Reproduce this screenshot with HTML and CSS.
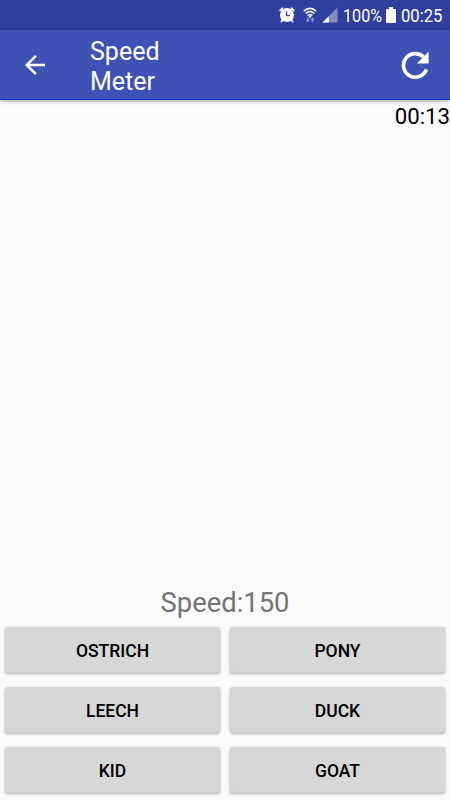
FILE: index.html
```
<!DOCTYPE html>
<html lang="en">
<head>
<meta charset="utf-8">
<title>Speed Meter</title>
<link rel="stylesheet" href="styles.css">
</head>
<body>
<div class="screen">
  <div class="status">
    <svg class="alarm" width="16" height="16" viewBox="0 0 16 16"><circle cx="8" cy="8" r="7" fill="#fff"/><path d="M1.2 3.4 3.4 1.3M12.6 1.3 14.8 3.4M3.5 13 2.4 14.6M12.5 13l1.1 1.6" stroke="#fff" stroke-width="1.8" stroke-linecap="round"/><path d="M7.6 4.4v4.3h3.4" fill="none" stroke="#303f9f" stroke-width="1.3"/></svg>
    <svg class="wifi" width="14" height="16" viewBox="0 0 14 16"><g fill="none" stroke="#fff" stroke-width="1.5"><path d="M.7 4.2Q7-1.4 13.3 4.2M2.7 6.4Q7 2.6 11.3 6.4M4.6 8.5Q7 6.4 9.4 8.5"/></g><path d="m5.4 9.2 1.6 1.7 1.6-1.7Q7 8 5.4 9.2" fill="#fff"/><path d="M2.5 12.8h1.4V10.5h1.7v2.3H7l-2.2 2.7zM7.2 13l2.2-2.7 2.2 2.7h-1.4v2.3H8.5V13z" fill="#8c95ca"/></svg>
    <svg class="signal" width="16" height="16" viewBox="0 0 16 16"><path d="M15.5.5v15H.5z" fill="#838cc5"/><path d="M6.8 9.2v6.3H.5z" fill="#fff"/></svg>
    <div class="percent"><span>100%</span></div>
    <svg class="battery" width="10" height="16" viewBox="0 0 10 16"><path d="M3 0h4v2h2q1 0 1 1v12q0 1-1 1H1q-1 0-1-1V3q0-1 1-1h2z" fill="#fff"/></svg>
    <div class="clock"><span>00:25</span></div>
  </div>
  <header class="toolbar">
    <svg class="back" width="30" height="30" viewBox="0 0 24 24"><path d="M20 11H7.83l5.59-5.59L12 4l-8 8 8 8 1.41-1.41L7.83 13H20z" fill="#fff"/></svg>
    <h1>Speed Meter</h1>
    <svg class="reload" width="30" height="30" viewBox="0 0 30 30"><path d="M26.4 19.4A11.8 11.8 0 1 1 23.4 6.8" fill="none" stroke="#fff" stroke-width="3.6"/><path d="M28.6 1.8v11.7H16.9z" fill="#fff"/></svg>
  </header>
  <main>
    <div class="timer">00:13</div>
    <div class="speed">Speed:150</div>
    <div class="choices">
      <button>OSTRICH</button><button>PONY</button>
      <button>LEECH</button><button>DUCK</button>
      <button>KID</button><button>GOAT</button>
    </div>
  </main>
</div>
</body>
</html>
```

FILE: styles.css
```
* { box-sizing: border-box; }
body { margin: 0; font-family: Roboto, sans-serif; }
.screen { width: 450px; height: 800px; display: flex; flex-direction: column; background: #fafafa; overflow: hidden; }
svg { display: block; flex: none; }
.status { height: 30px; flex: none; background: #303f9f; display: flex; justify-content: flex-end; padding: 0 6px 0 0; }
.percent, .clock { flex: none; white-space: nowrap; color: #fff; font-size: 19px; line-height: 30px; padding-top: 1px; }
.percent { width: 40px; }
.clock { width: 43px; }
.percent span, .clock span { display: inline-block; transform-origin: 0 50%; }
.percent span { transform: scaleX(.85); }
.clock span { transform: scaleX(.875); }
.alarm { margin: 7px 8px 0 0; }
.wifi { margin: 7px 5px 0 0; }
.signal { margin: 7px 5px 0 0; }
.battery { margin: 7px 5px 0 3px; }
.toolbar { height: 70px; flex: none; background: #3f51b5; display: flex; align-items: center; padding: 0 20px; border-bottom: 1px solid #0d3ab0; box-shadow: 0 1px 4px rgba(0,0,0,.35); z-index: 1; }
h1 { margin: 5px auto 0 40px; width: 90px; font-size: 25px; line-height: 30px; font-weight: 400; color: #fff; }
main { flex: 1; display: flex; flex-direction: column; }
.timer { font-size: 22.2px; line-height: 26px; padding-top: 3px; text-align: right; color: #000; }
.speed { margin-top: auto; height: 40px; font-size: 27.4px; line-height: 32px; text-align: center; color: #737373; }
.choices { display: grid; grid-template-columns: 1fr 1fr; gap: 14px 10px; padding: 0 5px 7px; }
button { height: 46px; border: 0; border-radius: 3px; padding: 2px 0 0; background: #d6d7d7; color: #000; font: 500 17.5px Roboto, sans-serif; box-shadow: inset 0 -1px 0 #cacbcb, 0 1px 3px rgba(0,0,0,.3); }
```
